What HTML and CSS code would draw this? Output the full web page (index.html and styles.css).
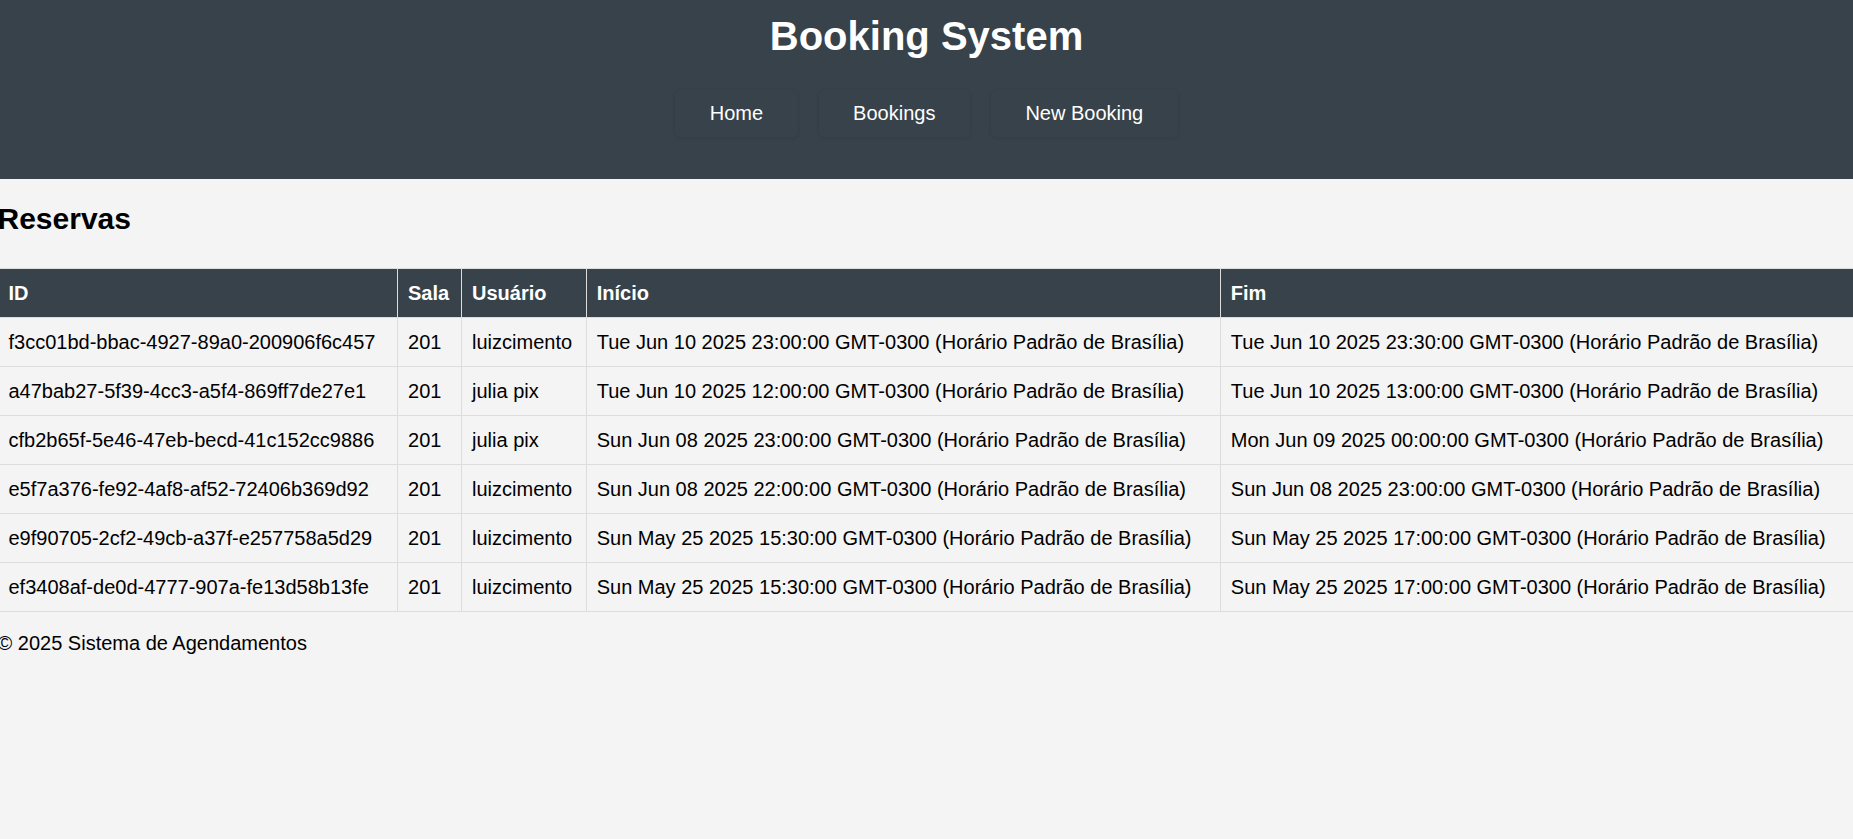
FILE: index.html
```html
<!DOCTYPE html>
<html lang="pt-BR">
<head>
<meta charset="utf-8">
<title>Booking System</title>
<link rel="stylesheet" href="styles.css">
</head>
<body>
<header class="site-header">
  <h1 class="site-title">Booking System</h1>
  <nav class="nav">
    <a class="nav-link" href="#">Home</a>
    <a class="nav-link" href="#">Bookings</a>
    <a class="nav-link" href="#">New Booking</a>
  </nav>
</header>
<div class="page">
  <main class="content">
    <h2 class="section-title">Reservas</h2>
    <table class="bookings">
      <thead>
        <tr><th>ID</th><th>Sala</th><th>Usuário</th><th>Início</th><th>Fim</th></tr>
      </thead>
      <tbody>
        <tr><td>f3cc01bd-bbac-4927-89a0-200906f6c457</td><td>201</td><td>luizcimento</td><td>Tue Jun 10 2025 23:00:00 GMT-0300 (Horário Padrão de Brasília)</td><td>Tue Jun 10 2025 23:30:00 GMT-0300 (Horário Padrão de Brasília)</td></tr>
        <tr><td>a47bab27-5f39-4cc3-a5f4-869ff7de27e1</td><td>201</td><td>julia pix</td><td>Tue Jun 10 2025 12:00:00 GMT-0300 (Horário Padrão de Brasília)</td><td>Tue Jun 10 2025 13:00:00 GMT-0300 (Horário Padrão de Brasília)</td></tr>
        <tr><td>cfb2b65f-5e46-47eb-becd-41c152cc9886</td><td>201</td><td>julia pix</td><td>Sun Jun 08 2025 23:00:00 GMT-0300 (Horário Padrão de Brasília)</td><td>Mon Jun 09 2025 00:00:00 GMT-0300 (Horário Padrão de Brasília)</td></tr>
        <tr><td>e5f7a376-fe92-4af8-af52-72406b369d92</td><td>201</td><td>luizcimento</td><td>Sun Jun 08 2025 22:00:00 GMT-0300 (Horário Padrão de Brasília)</td><td>Sun Jun 08 2025 23:00:00 GMT-0300 (Horário Padrão de Brasília)</td></tr>
        <tr><td>e9f90705-2cf2-49cb-a37f-e257758a5d29</td><td>201</td><td>luizcimento</td><td>Sun May 25 2025 15:30:00 GMT-0300 (Horário Padrão de Brasília)</td><td>Sun May 25 2025 17:00:00 GMT-0300 (Horário Padrão de Brasília)</td></tr>
        <tr><td>ef3408af-de0d-4777-907a-fe13d58b13fe</td><td>201</td><td>luizcimento</td><td>Sun May 25 2025 15:30:00 GMT-0300 (Horário Padrão de Brasília)</td><td>Sun May 25 2025 17:00:00 GMT-0300 (Horário Padrão de Brasília)</td></tr>
      </tbody>
    </table>
  </main>
  <footer class="site-footer">
    <p class="footer-text">© 2025 Sistema de Agendamentos</p>
  </footer>
</div>
</body>
</html>
```

FILE: styles.css
```css
html, body {
  margin: 0;
  padding: 0;
}

body {
  background: #f4f4f4;
  color: #000;
  font-family: "Liberation Sans", Arial, sans-serif;
  font-size: 20px;
  line-height: 23px;
  overflow: hidden;
}

.site-header {
  background: #37424a;
  color: #fff;
  text-align: center;
  padding: 12.5px 0 41px;
}

.site-title {
  margin: 0;
  font-size: 40px;
  line-height: 46px;
  font-weight: bold;
}

.nav {
  display: flex;
  justify-content: center;
  gap: 19px;
  margin-top: 30px;
}

.nav-link {
  color: #fff;
  text-decoration: none;
  font-size: 20px;
  line-height: 23px;
  padding: 12px 34.5px;
  border: 1px solid rgba(0, 0, 0, 0.03);
  border-radius: 7px;
  background: transparent;
  box-shadow: 0 1px 3px rgba(0, 0, 0, 0.07);
}

.page {
  margin: 0 -2px 0 -2.5px;
}

.section-title {
  margin: 23px 0 32px;
  font-size: 30px;
  line-height: 34.5px;
  font-weight: bold;
}

.bookings {
  width: 100%;
  border-collapse: collapse;
}

.bookings th,
.bookings td {
  border: 1px solid #ddd;
  padding: 12.5px 10px;
  text-align: left;
  line-height: 23px;
  white-space: nowrap;
}

.bookings th {
  background: #37424a;
  color: #fff;
  font-weight: bold;
}

.footer-text {
  margin: 20px 0;
}
```
